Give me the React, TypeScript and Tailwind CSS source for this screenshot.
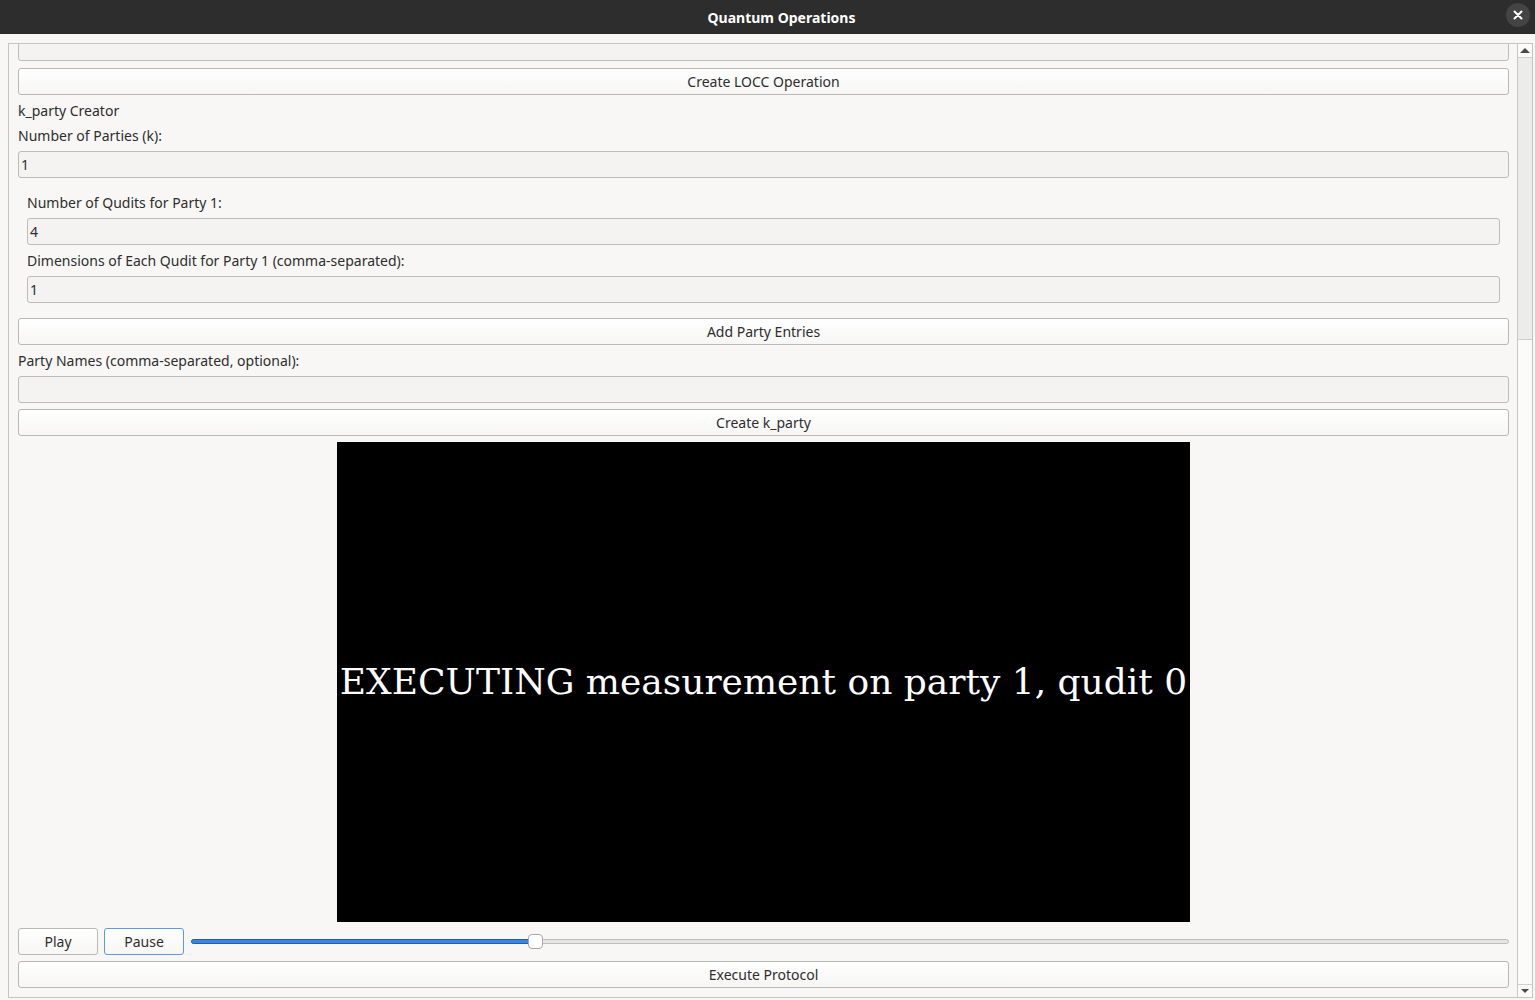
import React from 'react'

const font = { fontFamily: '"Noto Sans", "Open Sans", sans-serif' }

const Field = ({ value = '' }: { value?: string }) => (
    <div className="h-[27px] shrink-0 rounded-[3px] border border-[#bdbcb9] bg-[#f4f3f1] pl-[2px] text-[14px] leading-[25px] text-[#2e2e2e]">
        {value}
    </div>
)

const Button = ({ label, className = '', focused = false }: { label: string; className?: string; focused?: boolean }) => (
    <div className={`flex h-[27px] shrink-0 items-center justify-center rounded-[3px] border bg-gradient-to-b from-[#ffffff] to-[#f7f6f5] text-[14px] text-[#2e2e2e] ${focused ? 'border-[#5a9be6]' : 'border-[#b9b8b5]'} ${className}`}>
        {label}
    </div>
)

const Label = ({ text }: { text: string }) => (
    <div className="h-[19px] shrink-0 text-[14px] leading-[19px] text-[#2e2e2e]">{text}</div>
)

const Scrollbar = () => (
    <div className="flex w-[15px] shrink-0 flex-col border-l border-[#c8c7c4] bg-[#fbfbfa]">
        <div className="flex h-[14px] items-center justify-center border-b border-[#d0cfcc]">
            <div className="h-0 w-0 border-x-[5px] border-b-[5px] border-x-transparent border-b-[#4a4a4a]" />
        </div>
        <div className="h-[282px] border-b border-[#d0cfcc] bg-[#ececeb]" />
        <div className="flex-1" />
        <div className="flex h-[13px] items-center justify-center border-t border-[#d0cfcc]">
            <div className="h-0 w-0 border-x-[4px] border-t-[4px] border-x-transparent border-t-[#4a4a4a]" />
        </div>
    </div>
)

const Slider = () => (
    <div className="relative flex h-[27px] flex-1 items-center">
        <div className="h-[5px] w-full rounded-full border border-[#bebdba] bg-[#e6e5e3]" />
        <div className="absolute left-0 top-[11px] h-[5px] w-[340px] rounded-full border border-[#1f5fae] bg-[#3b85de]" />
        <div className="absolute left-[337px] top-[6px] h-[15px] w-[15px] rounded-[4px] border border-[#a9a8a5] bg-white" />
    </div>
)

export default function App() {
    return (
        <div className="flex h-[1000px] w-[1535px] flex-col overflow-hidden bg-[#f8f7f5]" style={font}>
            <div className="relative flex h-[34px] shrink-0 items-center justify-center bg-[#2d2d2d]">
                <span className="ml-[28px] text-[14px] font-bold text-white">Quantum Operations</span>
                <div className="absolute right-[5px] top-[3px] flex h-[24px] w-[24px] items-center justify-center rounded-full bg-[#444444]">
                    <svg width="10" height="10" viewBox="0 0 10 10">
                        <path d="M1.5 1.5 L8.5 8.5 M8.5 1.5 L1.5 8.5" stroke="white" strokeWidth="2" strokeLinecap="round" />
                    </svg>
                </div>
            </div>

            <div className="ml-[8px] mr-[2px] mt-[9px] flex h-[955px] border border-[#c5c4c1]">
                <div className="flex flex-1 flex-col gap-[6px] overflow-hidden pl-[9px] pr-[8px]">
                    <div className="-mt-[10px] flex flex-col">
                        <Field />
                    </div>
                    <div className="mt-[1px]">
                        <Button label="Create LOCC Operation" />
                    </div>
                    <Label text="k_party Creator" />
                    <Label text="Number of Parties (k):" />
                    <Field value="1" />
                    <div className="flex flex-col gap-[6px] px-[9px] py-[9px]">
                        <Label text="Number of Qudits for Party 1:" />
                        <Field value="4" />
                        <Label text="Dimensions of Each Qudit for Party 1 (comma-separated):" />
                        <Field value="1" />
                    </div>
                    <Button label="Add Party Entries" />
                    <Label text="Party Names (comma-separated, optional):" />
                    <Field />
                    <Button label="Create k_party" />
                    <div className="flex justify-center">
                        <div className="flex h-[480px] w-[853px] items-center justify-center overflow-hidden bg-black">
                            <span className="whitespace-nowrap text-[36px] text-white" style={{ fontFamily: '"DejaVu Serif", serif' }}>
                                EXECUTING measurement on party 1, qudit 0
                            </span>
                        </div>
                    </div>
                    <div className="flex items-center gap-[6px]">
                        <Button label="Play" className="w-[80px]" />
                        <Button label="Pause" className="w-[80px]" focused />
                        <div className="ml-[1px] flex flex-1">
                            <Slider />
                        </div>
                    </div>
                    <Button label="Execute Protocol" />
                </div>
                <Scrollbar />
            </div>
        </div>
    )
}
